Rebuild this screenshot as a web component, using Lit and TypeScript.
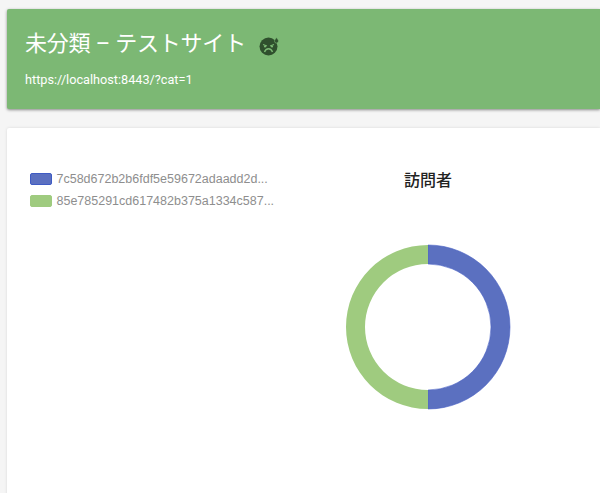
import { LitElement, html, css } from "lit";
import { customElement } from "lit/decorators.js";

@customElement("app-root")
export class AppRoot extends LitElement {
  static styles = css`
    :host { display: block; height: 493px; overflow: hidden; background: #f5f5f5; font-family: Roboto, "Noto Sans CJK JP", sans-serif; }
    .page { padding: 9px 0 0 7px; }
    .header {
      height: 100px; box-sizing: border-box; background: #7cb874; color: #fff; padding: 20px 0 0 18px;
      border-radius: 2px 0 0 2px;
      box-shadow: 0 1px 3px rgba(0,0,0,.45);
    }
    .title { display: flex; align-items: center; height: 30px; font-size: 22px; line-height: 30px; font-weight: 400; letter-spacing: -0.2px; }
    .title svg { margin-left: 13.5px; margin-top: 3px; }
    .url { margin-top: 13px; font-size: 12.7px; line-height: 16px; font-weight: 400; }
    .card {
      margin-top: 19px; height: 380px; background: #fff; border-radius: 2px 0 0 0;
      box-shadow: 0 0 3px rgba(0,0,0,.12);
      display: flex; box-sizing: border-box; padding-top: 43px;
    }
    .legend { width: 271.5px; padding: 1px 0 0 22.5px; flex: none; display: flex; flex-direction: column; gap: 8px; }
    .item { display: flex; align-items: center; height: 14px; gap: 5px; color: #8e8e8e; font-size: 12.5px; font-family: "Liberation Sans", Arial, sans-serif; white-space: nowrap; }
    .sw { width: 20px; height: 10px; border-radius: 2px; flex: none; border: 1px solid; }
    .sw.a { background: #5b70c0; border-color: #3f5bc4; }
    .sw.b { background: #9fcb7f; border-color: #9fcb7f; }
    .chart { width: 254px; flex: none; display: flex; flex-direction: column; align-items: center; }
    .chart-title { font-size: 16px; line-height: 20px; font-weight: 500; color: #222; }
    .ring { margin-top: 53px; display: block; }
  `;

  render() {
    return html`<div class="page">
      <div class="header">
        <div class="title">
          <span>未分類 – テストサイト</span>
          <svg width="20" height="20" viewBox="0 0 20 20" aria-hidden="true">
            <circle cx="9.5" cy="10.5" r="9" fill="#2f4f2d"></circle>
            <path d="M4 8.5 8 10M15 8.5 11 10" stroke="#7cb874" stroke-width="1.1" fill="none"></path>
            <circle cx="6" cy="10.5" r="1.1" fill="#7cb874"></circle>
            <circle cx="13" cy="10.5" r="1.1" fill="#7cb874"></circle>
            <path d="M5.5 16c.8-2.5 2.2-3.3 4-3.3s3.2.8 4 3.3" stroke="#7cb874" stroke-width="1.4" fill="none"></path>
            <path d="M17.5 1.5c1.2 1.7 2 2.6 2 3.6a2 2 0 0 1-4 0c0-1 .8-1.9 2-3.6z" fill="#2f4f2d" stroke="#7cb874" stroke-width=".6"></path>
          </svg>
        </div>
        <div class="url">https://localhost:8443/?cat=1</div>
      </div>
      <div class="card">
        <div class="legend">
          <div class="item"><span class="sw a"></span>7c58d672b2b6fdf5e59672adaadd2d...</div>
          <div class="item"><span class="sw b"></span>85e785291cd617482b375a1334c587...</div>
        </div>
        <div class="chart">
          <div class="chart-title">訪問者</div>
          <svg class="ring" width="166" height="166" viewBox="0 0 166 166">
            <path d="M83 1A82 82 0 0 1 83 165V146A63 63 0 0 0 83 20Z" fill="#5b70c0" stroke="#4a62c4" stroke-width=".6"></path>
            <path d="M83 1A82 82 0 0 0 83 165V146A63 63 0 0 1 83 20Z" fill="#9fcb7f"></path>
          </svg>
        </div>
      </div>
    </div>`;
  }
}
